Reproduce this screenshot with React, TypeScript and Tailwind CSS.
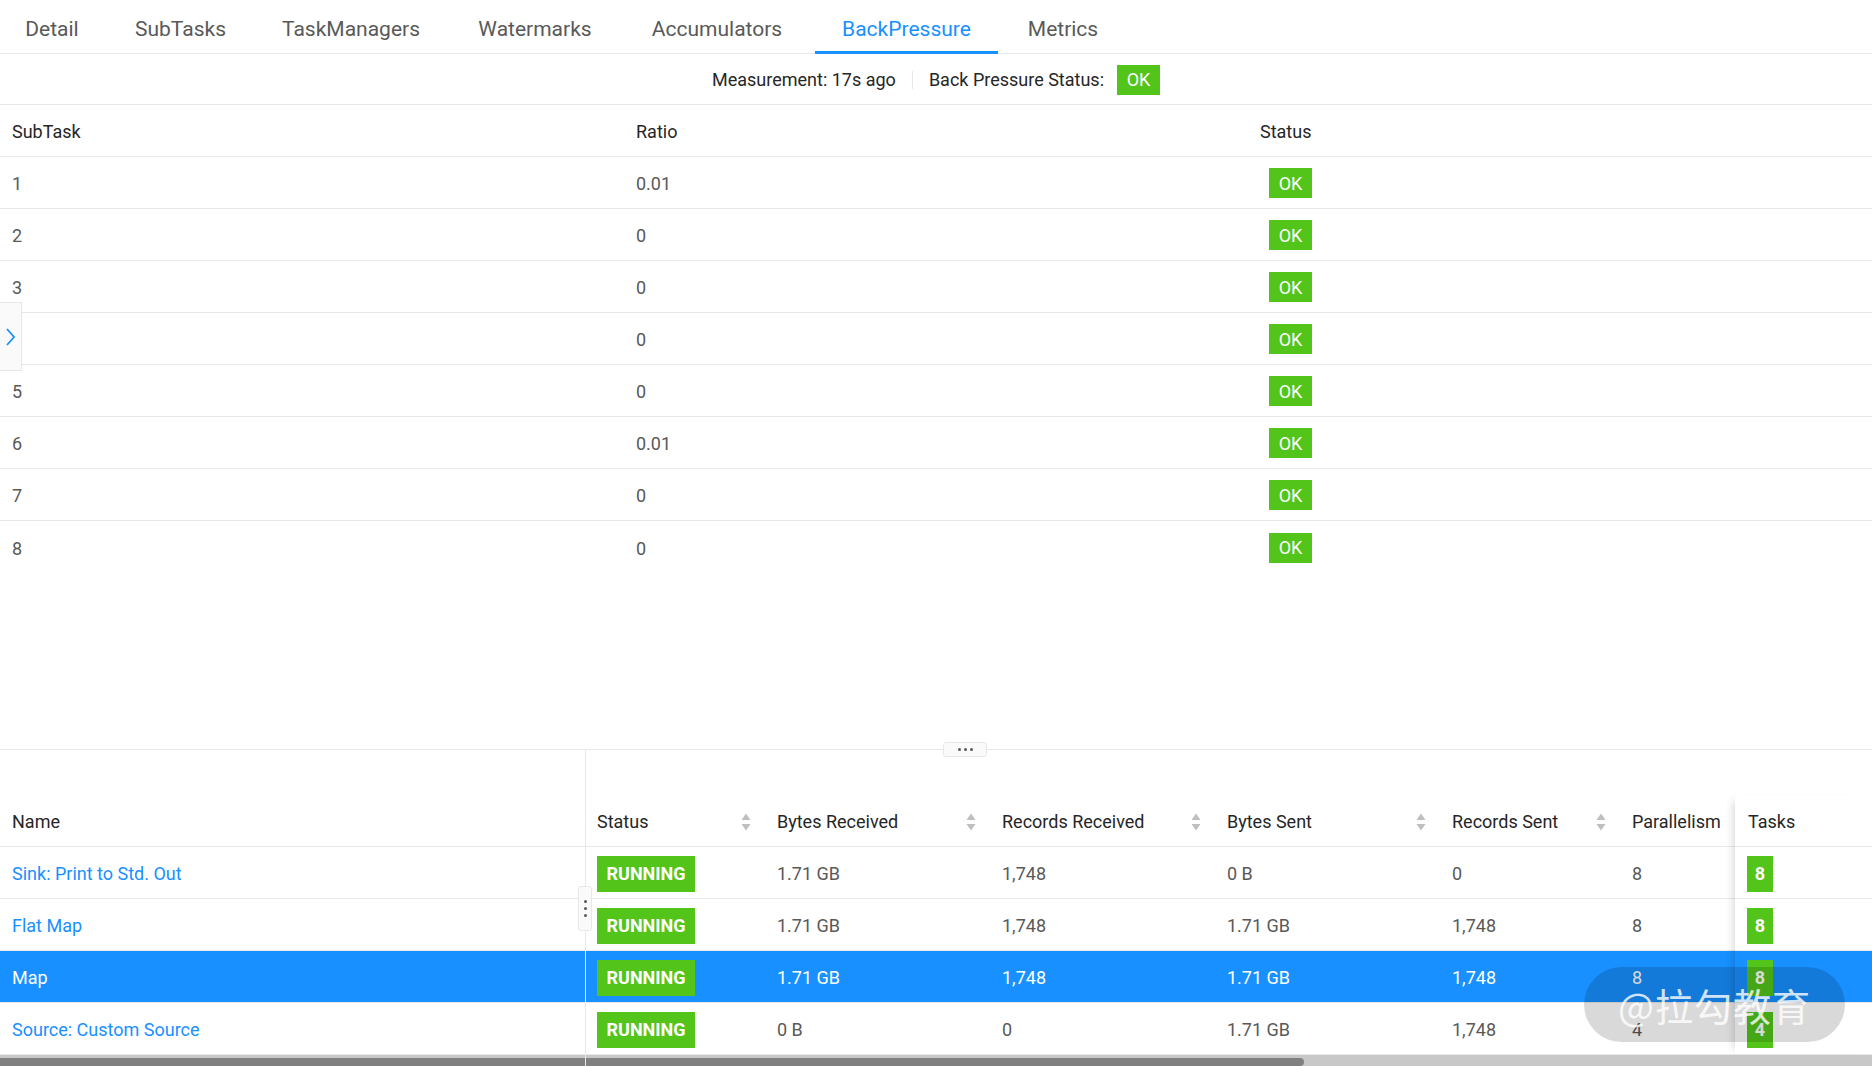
const TABS = [
  { label: 'Detail', cls: 'w-[104px]' },
  { label: 'SubTasks', cls: 'w-[141px]' },
  { label: 'TaskManagers', cls: 'w-[188px]' },
  { label: 'Watermarks', cls: 'w-[168px]' },
  { label: 'Accumulators', cls: 'w-[184px]' },
  { label: 'BackPressure', cls: 'w-[183px]', active: true },
  { label: 'Metrics', cls: 'w-[118px]' },
]

const SUBTASKS = [
  { id: 1, ratio: '0.01' },
  { id: 2, ratio: '0' },
  { id: 3, ratio: '0' },
  { id: 4, ratio: '0' },
  { id: 5, ratio: '0' },
  { id: 6, ratio: '0.01' },
  { id: 7, ratio: '0' },
  { id: 8, ratio: '0' },
]

const VERTICES = [
  { name: 'Sink: Print to Std. Out', br: '1.71 GB', rr: '1,748', bs: '0 B', rs: '0', par: '8', tasks: '8' },
  { name: 'Flat Map', br: '1.71 GB', rr: '1,748', bs: '1.71 GB', rs: '1,748', par: '8', tasks: '8' },
  { name: 'Map', br: '1.71 GB', rr: '1,748', bs: '1.71 GB', rs: '1,748', par: '8', tasks: '8', selected: true },
  { name: 'Source: Custom Source', br: '0 B', rr: '0', bs: '1.71 GB', rs: '1,748', par: '4', tasks: '4' },
]

function SortIcon() {
  return (
    <svg width="10" height="22" viewBox="0 0 10 22" className="shrink-0">
      <path d="M0.5 9 L5 2.5 L9.5 9 Z" fill="#bfbfbf" />
      <path d="M0.5 13 L5 19.5 L9.5 13 Z" fill="#bfbfbf" />
    </svg>
  )
}

function Badge({ children, cls }: { children: React.ReactNode; cls: string }) {
  return (
    <span className={`flex items-center justify-center bg-[#52c41a] text-white ${cls}`}>{children}</span>
  )
}

export default function App() {
  return (
    <div className="relative w-[1872px] h-[1066px] overflow-hidden bg-white font-['Roboto',sans-serif] text-[18px] text-[#595959]">
      {/* Tabs */}
      <div className="flex gap-[6px] h-[54px] border-b border-[#e8e8e8]">
        {TABS.map((tab) => (
          <div
            key={tab.label}
            className={`${tab.cls} relative flex items-center justify-center pt-[7px] text-[21px] ${tab.active ? 'text-[#1890ff]' : 'text-[#595959]'}`}
          >
            {tab.label}
            {tab.active && <div className="absolute left-0 right-0 bottom-[-1px] h-[3px] bg-[#1890ff]" />}
          </div>
        ))}
      </div>

      {/* Measurement */}
      <div className="flex items-center justify-center h-[51px] pt-[1px] border-b border-[#e8e8e8] text-[#262626]">
        <span>Measurement: 17s ago</span>
        <span className="mx-4 w-px h-[18px] bg-[#e8e8e8]" />
        <span>Back Pressure Status:</span>
        <Badge cls="ml-[13px] w-[43px] h-[30px]">OK</Badge>
      </div>

      {/* Subtask table */}
      <div className="h-[644px]">
        <div className="grid grid-cols-3 h-[52px] pt-[2px] border-b border-[#e8e8e8] text-[#262626]">
          <div className="flex items-center px-3">SubTask</div>
          <div className="flex items-center px-3">Ratio</div>
          <div className="flex items-center px-3">Status</div>
        </div>
        {SUBTASKS.map((row, i) => (
          <div
            key={row.id}
            className={`grid grid-cols-3 h-[52px] ${i < SUBTASKS.length - 1 ? 'border-b border-[#e8e8e8]' : ''}`}
          >
            <div className="flex items-center px-3 pt-[2px]">{row.id}</div>
            <div className="flex items-center px-3 pt-[2px]">{row.ratio}</div>
            <div className="flex items-center pl-[21px] pt-[1px]">
              <Badge cls="w-[43px] h-[30px]">OK</Badge>
            </div>
          </div>
        ))}
      </div>

      {/* Split line */}
      <div className="relative h-px bg-[#e8e8e8]">
        <div className="absolute left-[943px] top-[-7px] w-[44px] h-[15px] flex items-center justify-center gap-[3px] rounded-[3px] border border-[#e8e8e8] bg-[#fafafa]">
          <span className="w-[3px] h-[3px] rounded-full bg-[#595959]" />
          <span className="w-[3px] h-[3px] rounded-full bg-[#595959]" />
          <span className="w-[3px] h-[3px] rounded-full bg-[#595959]" />
        </div>
      </div>

      {/* Vertex tables */}
      <div className="flex h-[316px]">
        {/* Name pane */}
        <div className="w-[585px] flex flex-col">
          <div className="h-[45px]" />
          <div className="h-[52px] flex items-center px-3 pt-[2px] border-b border-[#e8e8e8] text-[#262626]">Name</div>
          {VERTICES.map((v) => (
            <div
              key={v.name}
              className={`h-[52px] flex items-center px-3 pt-[2px] border-b border-[#e8e8e8] ${v.selected ? 'bg-[#1890ff] text-white' : 'text-[#1890ff]'}`}
            >
              {v.name}
            </div>
          ))}
          <div className="h-[11px] bg-[#c8c8c8] pt-[3px]">
            <div className="h-[8px] bg-[#808080]" />
          </div>
        </div>

        {/* Divider */}
        <div className="relative w-px bg-[#e8e8e8]">
          <div className="absolute left-[-7px] top-[136px] w-[14px] h-[45px] flex flex-col items-center justify-center gap-[4px] rounded-[3px] border border-[#e8e8e8] bg-[#fafafa]">
            <span className="w-[3px] h-[3px] rounded-full bg-[#595959]" />
            <span className="w-[3px] h-[3px] rounded-full bg-[#595959]" />
            <span className="w-[3px] h-[3px] rounded-full bg-[#595959]" />
          </div>
        </div>

        {/* Metrics pane */}
        <div className="flex-1 flex flex-col">
          <div className="h-[45px]" />
          <div className="flex">
            <div className="w-[1149px]">
              <div className="grid grid-cols-[179px_225px_225px_225px_180px_115px] h-[52px] pt-[2px] border-b border-[#e8e8e8] text-[#262626]">
                <div className="flex items-center justify-between pl-[11px] pr-[14px]">Status<SortIcon /></div>
                <div className="flex items-center justify-between pl-3 pr-[14px]">Bytes Received<SortIcon /></div>
                <div className="flex items-center justify-between pl-3 pr-[14px]">Records Received<SortIcon /></div>
                <div className="flex items-center justify-between pl-3 pr-[14px]">Bytes Sent<SortIcon /></div>
                <div className="flex items-center justify-between pl-3 pr-[14px]">Records Sent<SortIcon /></div>
                <div className="flex items-center pl-3 whitespace-nowrap">Parallelism</div>
              </div>
              {VERTICES.map((v) => (
                <div
                  key={v.name}
                  className={`grid grid-cols-[179px_225px_225px_225px_180px_115px] h-[52px] border-b border-[#e8e8e8] ${v.selected ? 'bg-[#1890ff] text-white' : ''}`}
                >
                  <div className="flex items-center pl-[11px] pt-[2px]">
                    <Badge cls="w-[98px] h-[36px] font-bold">RUNNING</Badge>
                  </div>
                  <div className="flex items-center pl-3 pt-[2px]">{v.br}</div>
                  <div className="flex items-center pl-3 pt-[2px]">{v.rr}</div>
                  <div className="flex items-center pl-3 pt-[2px]">{v.bs}</div>
                  <div className="flex items-center pl-3 pt-[2px]">{v.rs}</div>
                  <div className="flex items-center pl-3 pt-[2px]">{v.par}</div>
                </div>
              ))}
            </div>
            <div className="relative w-[137px] shadow-[-8px_0_8px_-6px_rgba(0,0,0,0.15)]">
              <div className="h-[52px] flex items-center pl-[13px] pt-[2px] border-b border-[#e8e8e8] bg-white text-[#262626]">Tasks</div>
              {VERTICES.map((v) => (
                <div
                  key={v.name}
                  className={`h-[52px] flex items-center pl-3 pt-[2px] border-b border-[#e8e8e8] ${v.selected ? 'bg-[#1890ff]' : 'bg-white'}`}
                >
                  <Badge cls="w-[26px] h-[36px] font-bold">{v.tasks}</Badge>
                </div>
              ))}
            </div>
          </div>
          <div className="h-[11px] bg-[#c8c8c8] pt-[3px]">
            <div className="w-[718px] h-[8px] rounded-r-full bg-[#808080]" />
          </div>
        </div>
      </div>

      {/* Sidebar toggle */}
      <div className="absolute left-0 top-[302px] w-[22px] h-[69px] flex items-center justify-center border border-l-0 border-[#e8e8e8] bg-[#fafafa]">
        <svg width="12" height="20" viewBox="0 0 12 20" className="ml-[-2px]">
          <polyline points="3,2 10,10 3,18" fill="none" stroke="#1890ff" strokeWidth="1.8" />
        </svg>
      </div>

      {/* Watermark */}
      <div className="absolute left-[1584px] top-[967px] w-[261px] h-[75px] rounded-full bg-black/15 flex items-center justify-center">
        <span className="text-[38px] text-white/80 font-['Noto_Sans_CJK_SC',sans-serif] tracking-[1px]">@拉勾教育</span>
      </div>
    </div>
  )
}
